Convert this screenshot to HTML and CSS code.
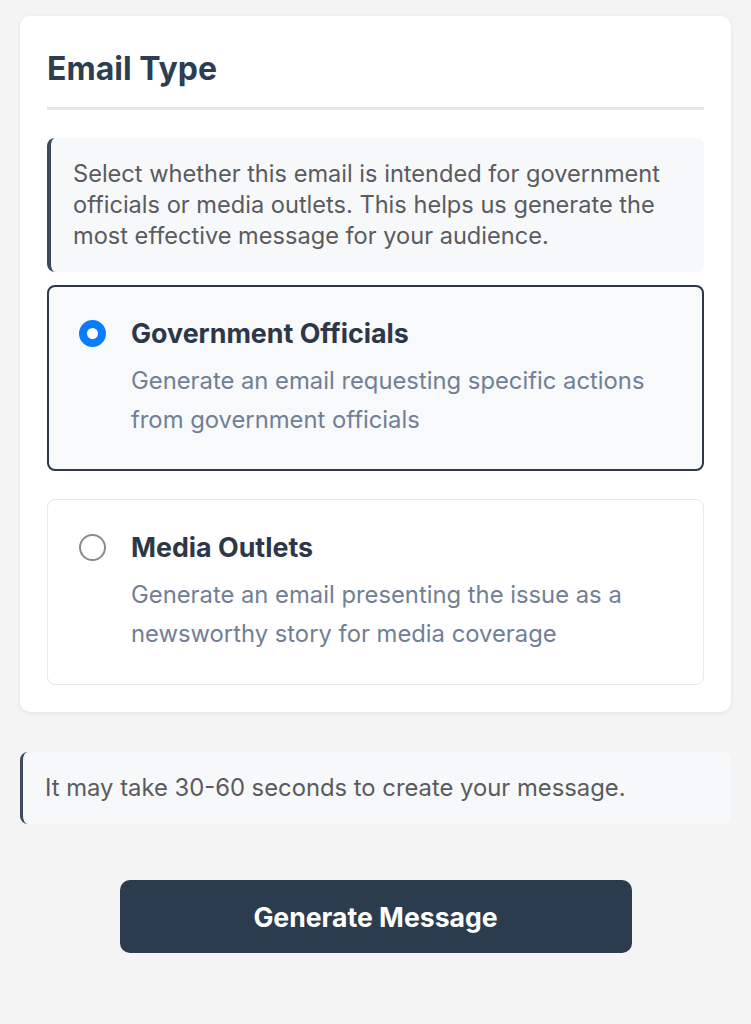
FILE: index.html
```html
<!DOCTYPE html>
<html lang="en">
<head>
    <meta charset="UTF-8">
    <meta name="viewport" content="width=device-width, initial-scale=1.0">
    <title>Email Type</title>
    <link rel="stylesheet" href="styles.css">
</head>
<body>
    <div class="card">
        <h2 class="card-title">Email Type</h2>

        <div class="info-box">
            Select whether this email is intended for government officials or media outlets. This helps us generate the most effective message for your audience.
        </div>

        <label class="option selected">
            <input type="radio" name="emailType" value="government" checked>
            <span class="option-body">
                <span class="option-title">Government Officials</span>
                <span class="option-desc">Generate an email requesting specific actions from government officials</span>
            </span>
        </label>

        <label class="option">
            <input type="radio" name="emailType" value="media">
            <span class="option-body">
                <span class="option-title">Media Outlets</span>
                <span class="option-desc">Generate an email presenting the issue as a newsworthy story for media coverage</span>
            </span>
        </label>
    </div>

    <div class="note">It may take 30-60 seconds to create your message.</div>

    <div class="actions">
        <button class="generate-button">Generate Message</button>
    </div>
</body>
</html>
```

FILE: styles.css
```css
body {
    font-family: Inter, "Noto Sans", sans-serif;
    margin: 0;
    padding: 16px 20px;
    background-color: #f4f4f4;
    color: #2c3e50;
}
.card {
    background-color: white;
    border-radius: 10px;
    padding: 34px 27px 27px;
    box-shadow: 0 1px 4px rgba(0, 0, 0, 0.08);
}
.card-title {
    margin: 0 0 28px;
    padding-bottom: 19px;
    font-size: 32px;
    line-height: 38px;
    font-weight: 700;
    border-bottom: 3px solid #e2e8f0;
}
.info-box {
    background-color: #f7f8fa;
    border-left: 4px solid #3d4a5c;
    border-radius: 8px;
    padding: 20px 20px 21px 22px;
    font-size: 23.6px;
    line-height: 31px;
    color: #5a5b5e;
    margin-bottom: 13px;
}
.option {
    display: flex;
    align-items: flex-start;
    gap: 25px;
    padding: 31px 30px 31px 31px;
    border: 1px solid #e2e8f0;
    border-radius: 8px;
    margin-bottom: 28px;
    cursor: pointer;
}
.option:last-child {
    margin-bottom: 0;
}
.option.selected {
    border: 2px solid #2d3748;
    background-color: #f7f9fb;
    padding: 30px 29px 30px 30px;
}
.option input[type="radio"] {
    appearance: none;
    flex: none;
    width: 27px;
    height: 27px;
    margin: 3px 0 0;
    border: 2px solid #8a8a8a;
    border-radius: 50%;
    background-color: white;
}
.option input[type="radio"]:checked {
    border: 8px solid #0a7cff;
}
.option-body {
    display: flex;
    flex-direction: column;
}
.option-title {
    font-size: 26.8px;
    font-weight: 700;
    line-height: 32px;
    color: #2d3748;
    margin-bottom: 12px;
}
.option-desc {
    font-size: 23.8px;
    line-height: 39px;
    color: #718096;
}
.note {
    margin-top: 40px;
    background-color: #f7f8fa;
    border-left: 3px solid #3d4a5c;
    border-radius: 8px;
    padding: 20px 22px;
    font-size: 23.8px;
    line-height: 32px;
    color: #5a5b5e;
}
.actions {
    display: flex;
    justify-content: center;
    margin-top: 56px;
}
.generate-button {
    width: 512px;
    height: 73px;
    background-color: #2c3c4f;
    color: white;
    border: none;
    border-radius: 10px;
    font-family: inherit;
    font-size: 26.6px;
    font-weight: 700;
    cursor: pointer;
}
```
